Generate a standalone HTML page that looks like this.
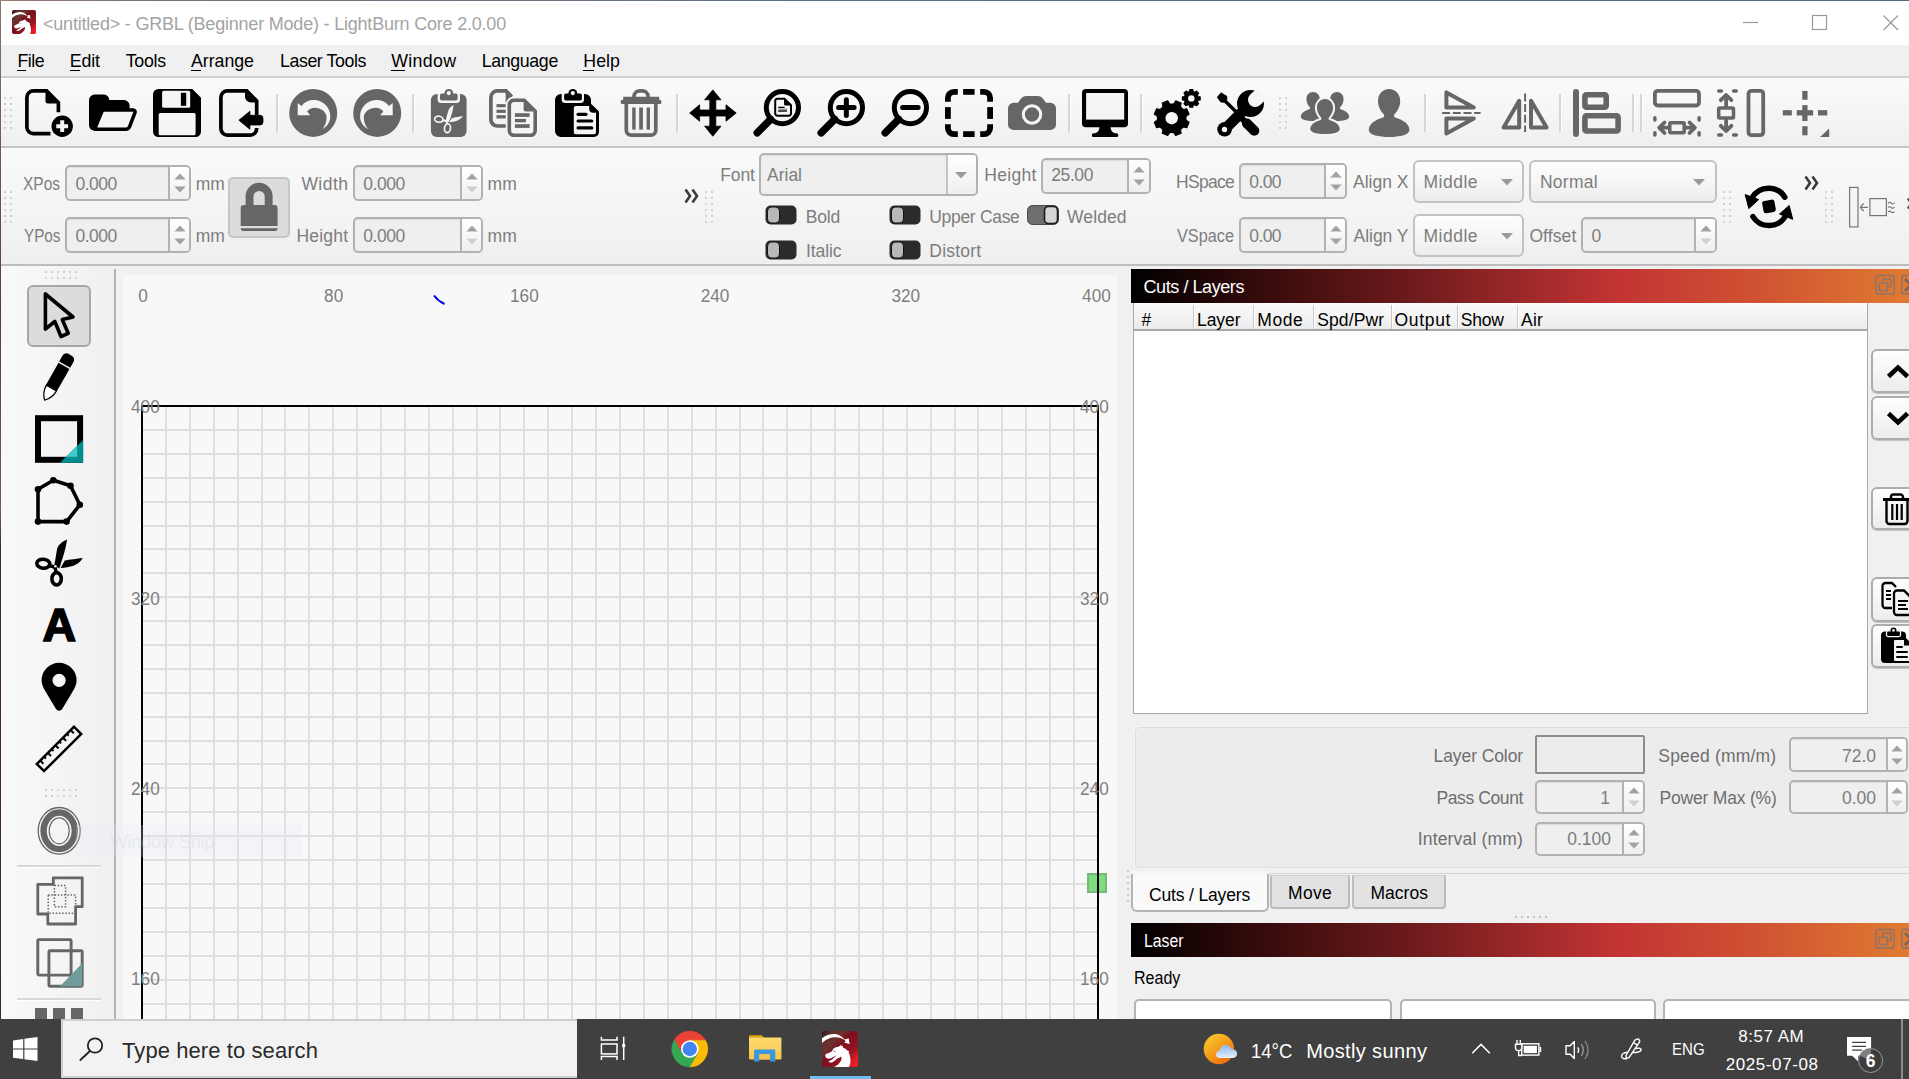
<!DOCTYPE html>
<html><head><meta charset="utf-8"><title>LightBurn</title>
<style>
html,body{margin:0;padding:0;}
body{width:1909px;height:1079px;position:relative;overflow:hidden;background:#f0f0f0;font-family:"Liberation Sans",sans-serif;}
.t{position:absolute;white-space:pre;line-height:normal;}
svg{overflow:visible;display:block;}
div{box-sizing:content-box;}
</style></head><body>
<div style="position:absolute;left:0px;top:0px;width:1909px;height:45px;background:#fff;"></div>
<div style="position:absolute;left:0px;top:0px;width:1909px;height:1px;background:linear-gradient(90deg,#9a7d72 0%,#74707a 8%,#5f7383 45%,#5b6f80 70%,#566777 100%);"></div>
<div style="position:absolute;left:0px;top:1px;width:1px;height:1019px;background:linear-gradient(#8c746e 0%,#5a3c34 30%,#7a5a50 50%,#3e2824 54%,#4a2c2c 75%,#3a2428 100%);"></div>
<span class="t" style="left:43.00px;top:13.71px;font-size:18px;color:#a4a4a4;letter-spacing:-0.204px;">&lt;untitled&gt; - GRBL (Beginner Mode) - LightBurn Core 2.0.00</span>
<svg style="position:absolute;left:1735px;top:8px;" width="170" height="30" viewBox="0 0 170 30"><g stroke="#9a9a9a" stroke-width="1.2" fill="none">
<path d="M8 14.5H23"/><rect x="77.5" y="7.5" width="14" height="14"/><path d="M148.5 7.5L163 22M163 7.5L148.5 22"/></g></svg>
<div style="position:absolute;left:1px;top:45px;width:1908px;height:33px;background:#f0f0f0;"></div>
<div style="position:absolute;left:1px;top:76px;width:1908px;height:2px;background:#cfcfcf;"></div>
<span class="t" style="left:17.40px;top:50.89px;font-size:17.8px;color:#000;letter-spacing:-0.471px;text-decoration-thickness:1px;text-underline-offset:2px;">File</span>
<div style="position:absolute;left:17px;top:70px;width:9px;height:1px;background:#000;"></div>
<span class="t" style="left:69.70px;top:50.89px;font-size:17.8px;color:#000;letter-spacing:-0.118px;text-decoration-thickness:1px;text-underline-offset:2px;">Edit</span>
<div style="position:absolute;left:70px;top:70px;width:10px;height:1px;background:#000;"></div>
<span class="t" style="left:125.70px;top:50.89px;font-size:17.8px;color:#000;letter-spacing:-0.251px;text-decoration-thickness:1px;text-underline-offset:2px;">Tools</span>
<span class="t" style="left:191.00px;top:50.89px;font-size:17.8px;color:#000;letter-spacing:-0.047px;text-decoration-thickness:1px;text-underline-offset:2px;">Arrange</span>
<div style="position:absolute;left:191px;top:70px;width:10px;height:1px;background:#000;"></div>
<span class="t" style="left:280.00px;top:50.89px;font-size:17.8px;color:#000;letter-spacing:-0.428px;text-decoration-thickness:1px;text-underline-offset:2px;">Laser Tools</span>
<span class="t" style="left:391.20px;top:50.89px;font-size:17.8px;color:#000;letter-spacing:0.348px;text-decoration-thickness:1px;text-underline-offset:2px;">Window</span>
<div style="position:absolute;left:391px;top:70px;width:14px;height:1px;background:#000;"></div>
<span class="t" style="left:481.70px;top:50.89px;font-size:17.8px;color:#000;letter-spacing:-0.362px;text-decoration-thickness:1px;text-underline-offset:2px;">Language</span>
<span class="t" style="left:583.30px;top:50.89px;font-size:17.8px;color:#000;letter-spacing:0.023px;text-decoration-thickness:1px;text-underline-offset:2px;">Help</span>
<div style="position:absolute;left:583px;top:70px;width:11px;height:1px;background:#000;"></div>
<div style="position:absolute;left:1px;top:78px;width:1908px;height:69px;background:linear-gradient(#fbfbfb,#efefef);"></div>
<div style="position:absolute;left:1px;top:146px;width:1908px;height:2px;background:#c4c4c4;"></div>
<div style="position:absolute;left:1px;top:148px;width:1908px;height:117px;background:linear-gradient(#fafafa,#efefef);"></div>
<div style="position:absolute;left:1px;top:264px;width:1908px;height:2px;background:#bdbdbd;"></div>
<svg style="position:absolute;left:4px;top:97px;" width="8" height="34" viewBox="0 0 8 34"><g fill="#d2d2d2"><rect x="0" y="0" width="2" height="2"/><rect x="6" y="0" width="2" height="2"/><rect x="0" y="6" width="2" height="2"/><rect x="6" y="6" width="2" height="2"/><rect x="0" y="12" width="2" height="2"/><rect x="6" y="12" width="2" height="2"/><rect x="0" y="18" width="2" height="2"/><rect x="6" y="18" width="2" height="2"/><rect x="0" y="24" width="2" height="2"/><rect x="6" y="24" width="2" height="2"/><rect x="0" y="30" width="2" height="2"/><rect x="6" y="30" width="2" height="2"/></g></svg>
<svg style="position:absolute;left:1279px;top:97px;" width="8" height="34" viewBox="0 0 8 34"><g fill="#d2d2d2"><rect x="0" y="0" width="2" height="2"/><rect x="6" y="0" width="2" height="2"/><rect x="0" y="6" width="2" height="2"/><rect x="6" y="6" width="2" height="2"/><rect x="0" y="12" width="2" height="2"/><rect x="6" y="12" width="2" height="2"/><rect x="0" y="18" width="2" height="2"/><rect x="6" y="18" width="2" height="2"/><rect x="0" y="24" width="2" height="2"/><rect x="6" y="24" width="2" height="2"/><rect x="0" y="30" width="2" height="2"/><rect x="6" y="30" width="2" height="2"/></g></svg>
<div style="position:absolute;left:276px;top:94px;width:2px;height:38px;background:#d6d6d6;border-right:1px solid #fdfdfd;"></div>
<div style="position:absolute;left:412px;top:94px;width:2px;height:38px;background:#d6d6d6;border-right:1px solid #fdfdfd;"></div>
<div style="position:absolute;left:676px;top:94px;width:2px;height:38px;background:#d6d6d6;border-right:1px solid #fdfdfd;"></div>
<div style="position:absolute;left:1068px;top:94px;width:2px;height:38px;background:#d6d6d6;border-right:1px solid #fdfdfd;"></div>
<div style="position:absolute;left:1140px;top:94px;width:2px;height:38px;background:#d6d6d6;border-right:1px solid #fdfdfd;"></div>
<div style="position:absolute;left:1424px;top:94px;width:2px;height:38px;background:#d6d6d6;border-right:1px solid #fdfdfd;"></div>
<div style="position:absolute;left:1559px;top:94px;width:2px;height:38px;background:#d6d6d6;border-right:1px solid #fdfdfd;"></div>
<div style="position:absolute;left:1632px;top:94px;width:2px;height:38px;background:#d6d6d6;border-right:1px solid #fdfdfd;"></div>
<div style="position:absolute;left:1640px;top:94px;width:2px;height:38px;background:#d6d6d6;border-right:1px solid #fdfdfd;"></div>
<svg style="position:absolute;left:25px;top:89px;" width="48" height="48" viewBox="0 0 48 48"><path d="M25.5 44.7H8.4A6.5 6.5 0 0 1 1.9 38.2V8.4A6.5 6.5 0 0 1 8.4 1.9H21.6L33.4 13.7V23.2" fill="none" stroke="#000" stroke-width="3.7"/>
<path d="M20.5 2.5V12.2A2.4 2.4 0 0 0 22.9 14.6H33Z" fill="#000"/>
<circle cx="37.2" cy="37.2" r="12.2" fill="#f5f5f5"/><circle cx="37.2" cy="37.2" r="10.7" fill="#000"/>
<path d="M31.3 37.2H43.1M37.2 31.3V43.1" stroke="#f5f5f5" stroke-width="4"/></svg>
<svg style="position:absolute;left:89px;top:89px;" width="48" height="48" viewBox="0 0 48 48"><path d="M0 11.2A5.6 5.6 0 0 1 5.6 5.6H15A5.4 5.4 0 0 1 20.3 11H35A5.6 5.6 0 0 1 40.6 16.6V21H13L4.5 41.6A6 6 0 0 1 0 36Z" fill="#000"/>
<path d="M13.6 20.9H44.2A1.9 1.9 0 0 1 46 23.5L40.6 37.6A4.2 4.2 0 0 1 36.7 40.2H5.6Z" fill="#f5f5f5" stroke="#000" stroke-width="3.5" stroke-linejoin="round"/></svg>
<svg style="position:absolute;left:153px;top:89px;" width="48" height="48" viewBox="0 0 48 48"><path d="M5.5 0H39.3L48 8.7V42.5A5.5 5.5 0 0 1 42.5 48H5.5A5.5 5.5 0 0 1 0 42.5V5.5A5.5 5.5 0 0 1 5.5 0Z" fill="#000"/>
<rect x="9.1" y="1.8" width="28.1" height="17" rx="1.6" fill="#f5f5f5"/><rect x="27.9" y="3.8" width="5.3" height="13" fill="#000"/>
<rect x="5.7" y="23.9" width="36.9" height="22.4" rx="1.6" fill="#f5f5f5"/></svg>
<svg style="position:absolute;left:217px;top:89px;" width="48" height="48" viewBox="0 0 48 48"><path d="M39.7 26.3V12L29.8 1.9H10.4A6.5 6.5 0 0 0 3.9 8.4V39.6A6.5 6.5 0 0 0 10.4 46.1H33.2A6.5 6.5 0 0 0 39.7 39.6V39" fill="none" stroke="#000" stroke-width="3.7"/>
<path d="M28 2.5V7.4A6 6 0 0 0 34 13.4H39Z" fill="#000"/>
<path d="M21.9 31.2L32.9 22.2V26.3H43A3 3 0 0 1 46 29.3V33A3 3 0 0 1 43 36H32.9V40.3Z" fill="#000" stroke="#000" stroke-width="0.8" stroke-linejoin="round"/></svg>
<svg style="position:absolute;left:289px;top:89px;" width="48" height="48" viewBox="0 0 48 48"><circle cx="24.2" cy="23.9" r="24" fill="#666"/><path d="M8.7 14.1L12.4 16.9Q17.2 11.1 24.6 11.1C34 11.1 41.3 18.4 41.3 27.5C41.3 33 38 37.6 33.6 39.9C36.4 36 37.6 32.6 37.6 28.6C37.6 23 32 18.8 25.6 18.8Q21 18.8 18.1 22.5L21.2 26.2H8.7Z" fill="#f5f5f5"/></svg>
<svg style="position:absolute;left:353px;top:89px;" width="48" height="48" viewBox="0 0 48 48"><circle cx="24.2" cy="23.9" r="24" fill="#666"/><path transform="translate(48.4,0) scale(-1,1)" d="M8.7 14.1L12.4 16.9Q17.2 11.1 24.6 11.1C34 11.1 41.3 18.4 41.3 27.5C41.3 33 38 37.6 33.6 39.9C36.4 36 37.6 32.6 37.6 28.6C37.6 23 32 18.8 25.6 18.8Q21 18.8 18.1 22.5L21.2 26.2H8.7Z" fill="#f5f5f5"/></svg>
<svg style="position:absolute;left:424px;top:89px;" width="48" height="48" viewBox="0 0 48 48"><rect x="6.9" y="5" width="35.7" height="43" rx="6" fill="#666"/>
<path d="M13.6 4.5V10.5A3.6 3.6 0 0 0 17.2 14.1H32.4A3.6 3.6 0 0 0 36 10.5V4.5Z" fill="#f5f5f5"/>
<circle cx="24.8" cy="4.3" r="4.4" fill="#666"/>
<rect x="16" y="4.4" width="17.6" height="7.2" rx="1.8" fill="#666"/>
<circle cx="24.8" cy="4.1" r="2.1" fill="#f5f5f5"/>
<g fill="#f5f5f5"><path d="M29.6 16.1C26 18 24.4 20.5 23.8 23.5L21.5 32L25 33C27.2 27.5 29 22 29.6 16.1Z"/>
<path d="M39 27C35.5 27.6 31 28.3 27.8 29.3L25.2 33.2C31 32.8 36 31.5 39 27Z"/></g>
<ellipse cx="14.8" cy="30.2" rx="4.2" ry="3" fill="none" stroke="#f5f5f5" stroke-width="1.7" transform="rotate(8 14.8 30.2)"/>
<ellipse cx="23.5" cy="39.3" rx="3" ry="4.4" fill="none" stroke="#f5f5f5" stroke-width="1.7" transform="rotate(8 23.5 39.3)"/>
<path d="M19 31L23 32.6M22.6 32.6L23.4 35" stroke="#f5f5f5" stroke-width="2"/></svg>
<svg style="position:absolute;left:488px;top:89px;" width="48" height="48" viewBox="0 0 48 48"><path d="M18.5 37H9.4A6.5 6.5 0 0 1 2.9 30.5V8.4A6.5 6.5 0 0 1 9.4 1.9H18L23.8 7.7" fill="none" stroke="#666" stroke-width="3.7"/>
<path d="M17.6 1V14H24.5V8Z" fill="#666"/>
<g fill="#666"><rect x="8.5" y="15.1" width="9.5" height="3.2"/><rect x="8.5" y="20.7" width="9.5" height="3.2"/><rect x="8.5" y="26.2" width="9.5" height="3.3"/></g>
<path d="M25.4 9.4H37L49 21.6V41.6A6.4 6.4 0 0 1 42.6 48H25.9A6.4 6.4 0 0 1 19.5 41.6V15.8A6.4 6.4 0 0 1 25.4 9.4Z" fill="#f5f5f5" stroke="#f5f5f5" stroke-width="3.6"/><path d="M25.4 9.4H37L49 21.6V41.6A6.4 6.4 0 0 1 42.6 48H25.9A6.4 6.4 0 0 1 19.5 41.6V15.8A6.4 6.4 0 0 1 25.4 9.4Z" fill="#666"/>
<path d="M26 13H35.6V20.5A2 2 0 0 0 37.6 22.5H45.4V41.2A3.2 3.2 0 0 1 42.2 44.4H26.3A3.2 3.2 0 0 1 23.1 41.2V16.2A3.2 3.2 0 0 1 26 13Z" fill="#f5f5f5"/>
<g fill="#666"><rect x="26.9" y="24.2" width="14.7" height="3.7"/><rect x="26.9" y="29.9" width="11" height="3.4"/><rect x="26.9" y="35.2" width="14.7" height="3.7"/></g></svg>
<svg style="position:absolute;left:553px;top:89px;" width="48" height="48" viewBox="0 0 48 48"><path d="M8 5H32A6 6 0 0 1 38 11V14.8L46 22.6V43A5 5 0 0 1 41 48H8A6 6 0 0 1 2 42V11A6 6 0 0 1 8 5Z" fill="#000"/>
<path d="M8.7 4.5V10.5A3.6 3.6 0 0 0 12.3 14.1H27.4A3.6 3.6 0 0 0 31 10.5V4.5Z" fill="#f5f5f5"/>
<circle cx="19.8" cy="4.3" r="4.4" fill="#000"/>
<rect x="11.1" y="4.4" width="17.8" height="7.2" rx="1.8" fill="#000"/>
<circle cx="19.8" cy="4.1" r="2.1" fill="#f5f5f5"/>
<path d="M22.8 17.1H36.2V19.8A4 4 0 0 0 40.2 23.8H43V43.3A2 2 0 0 1 41 45.3H22.8A2 2 0 0 1 20.8 43.3V19.1A2 2 0 0 1 22.8 17.1Z" fill="#f5f5f5"/>
<g stroke="#000" stroke-width="3.2" stroke-linecap="round"><path d="M25.1 25.3H33"/><path d="M25.1 32H38.7"/><path d="M25.1 38.9H38.7"/></g></svg>
<svg style="position:absolute;left:617px;top:89px;" width="48" height="48" viewBox="0 0 48 48"><path d="M17 8.5V7.6A5.7 5.7 0 0 1 22.7 1.9H25.4A5.7 5.7 0 0 1 31.1 7.6V8.5" fill="none" stroke="#666" stroke-width="3.7"/>
<rect x="6.1" y="7.7" width="36.2" height="4" rx="1" fill="#666"/><rect x="3.8" y="11" width="40.5" height="3.9" rx="0.8" fill="#666"/>
<path d="M9.3 14V41.2A5 5 0 0 0 14.3 46.2H33.8A5 5 0 0 0 38.8 41.2V14" fill="none" stroke="#666" stroke-width="3.7"/>
<g fill="#666"><rect x="15.2" y="18.5" width="3.4" height="22.1"/><rect x="22.2" y="18.5" width="3.7" height="22.1"/><rect x="29.6" y="18.5" width="3.4" height="22.1"/></g></svg>
<svg style="position:absolute;left:689px;top:89px;" width="48" height="48" viewBox="0 0 48 48"><path d="M23.8 0.9L32 10.8H26.8V21H37V15.8L47.2 24L37 32.2V27H26.8V37.2H32L23.8 47.2L15.6 37.2H20.8V27H10.6V32.2L0.7 24L10.6 15.8V21H20.8V10.8H15.6Z" fill="#000" stroke="#000" stroke-width="0.8" stroke-linejoin="round"/></svg>
<svg style="position:absolute;left:753px;top:89px;" width="48" height="48" viewBox="0 0 48 48"><circle cx="29.4" cy="18.6" r="16.1" fill="none" stroke="#000" stroke-width="5"/><path d="M17.6 30.4L4.2 43.8" stroke="#000" stroke-width="7.4" stroke-linecap="round"/><path d="M24.2 9.7H31.5L38 16.2V24.5A2.2 2.2 0 0 1 35.8 26.7H24.4A2.2 2.2 0 0 1 22.2 24.5V11.9A2.2 2.2 0 0 1 24.2 9.7Z" fill="none" stroke="#000" stroke-width="2"/>
<path d="M31 9.5V15A1.5 1.5 0 0 0 32.5 16.5H38.2Z" fill="#000"/><path d="M25.2 18.4H31.6" stroke="#000" stroke-width="1.3"/><path d="M25.2 20.2H34" stroke="#888" stroke-width="1.2"/><path d="M25.2 22H34" stroke="#000" stroke-width="1.4"/></svg>
<svg style="position:absolute;left:817px;top:89px;" width="48" height="48" viewBox="0 0 48 48"><circle cx="29.4" cy="18.6" r="16.1" fill="none" stroke="#000" stroke-width="5"/><path d="M17.6 30.4L4.2 43.8" stroke="#000" stroke-width="7.4" stroke-linecap="round"/><path d="M21.6 18.6H37.1M29.35 10.8V26.4" stroke="#000" stroke-width="5" stroke-linecap="round"/></svg>
<svg style="position:absolute;left:881px;top:89px;" width="48" height="48" viewBox="0 0 48 48"><circle cx="29.4" cy="18.6" r="16.1" fill="none" stroke="#000" stroke-width="5"/><path d="M17.6 30.4L4.2 43.8" stroke="#000" stroke-width="7.4" stroke-linecap="round"/><path d="M21.6 18.6H37.1" stroke="#000" stroke-width="5" stroke-linecap="round"/></svg>
<svg style="position:absolute;left:945px;top:89px;" width="48" height="48" viewBox="0 0 48 48"><g fill="none" stroke="#000" stroke-width="5.8"><path d="M2.9 12.8V8.9A6 6 0 0 1 8.9 2.9H12.8"/><path d="M18.1 2.9H29.6"/><path d="M35.2 2.9H39.1A6 6 0 0 1 45.1 8.9V12.8"/><path d="M45.1 18.1V29.9"/><path d="M45.1 35.2V39.1A6 6 0 0 1 39.1 45.1H35.2"/><path d="M29.6 45.1H18.1"/><path d="M12.8 45.1H8.9A6 6 0 0 1 2.9 39.1V35.2"/><path d="M2.9 29.9V18.1"/></g></svg>
<svg style="position:absolute;left:1008px;top:89px;" width="48" height="48" viewBox="0 0 48 48"><path d="M5.5 13.8H10C12.5 10 14.5 6.9 18 6.9H30C33.5 6.9 35.5 10 38 13.8H42.5A5.5 5.5 0 0 1 48 19.3V35.4A5.5 5.5 0 0 1 42.500 40.9H5.5A5.5 5.5 0 0 1 0 35.4V19.3A5.5 5.5 0 0 1 5.5 13.8Z" fill="#666"/>
<circle cx="24" cy="25.5" r="8.7" fill="none" stroke="#f5f5f5" stroke-width="3.1"/></svg>
<svg style="position:absolute;left:1081px;top:89px;" width="48" height="48" viewBox="0 0 48 48"><rect x="1" y="0" width="46" height="38.3" rx="3.8" fill="#000"/><rect x="5.1" y="4" width="38.1" height="26.6" fill="#f5f5f5"/>
<path d="M18.4 38H29.6C29.6 41.5 31.5 44.3 35.5 44.3A1.85 1.85 0 0 1 35.500 48H12.600A1.85 1.85 0 0 1 12.6 44.3C16.5 44.3 18.4 41.5 18.4 38Z" fill="#000"/></svg>
<svg style="position:absolute;left:1152px;top:89px;" width="48" height="48" viewBox="0 0 48 48"><path d="M21.84 14.76L23.69 11.85L29.15 14.12L28.40 17.47A8.03 8.03 0 0 0 31.43 20.50L31.43 20.50L34.78 19.75L37.05 25.21L34.14 27.06A8.03 8.03 0 0 0 34.14 31.34L34.14 31.34L37.05 33.19L34.78 38.65L31.43 37.90A8.03 8.03 0 0 0 28.40 40.93L28.40 40.93L29.15 44.28L23.69 46.55L21.84 43.64A8.03 8.03 0 0 0 17.56 43.64L17.56 43.64L15.71 46.55L10.25 44.28L11.00 40.93A8.03 8.03 0 0 0 7.97 37.90L7.97 37.90L4.62 38.65L2.35 33.19L5.26 31.34A8.03 8.03 0 0 0 5.26 27.06L5.26 27.06L2.35 25.21L4.62 19.75L7.97 20.50A8.03 8.03 0 0 0 11.00 17.47L11.00 17.47L10.25 14.12L15.71 11.85L17.56 14.76A8.03 8.03 0 0 0 21.84 14.76Z" fill="#000" stroke="#000" stroke-width="1.2" stroke-linejoin="round"/><circle cx="19.7" cy="29.2" r="6.2" fill="#f5f5f5"/><path d="M37.55 2.42L37.80 0.53L40.80 0.53L41.05 2.42A3.96 3.96 0 0 0 43.00 3.22L43.00 3.22L44.52 2.07L46.63 4.18L45.48 5.70A3.96 3.96 0 0 0 46.28 7.65L46.28 7.65L48.17 7.90L48.17 10.90L46.28 11.15A3.96 3.96 0 0 0 45.48 13.10L45.48 13.10L46.63 14.62L44.52 16.73L43.00 15.58A3.96 3.96 0 0 0 41.05 16.38L41.05 16.38L40.80 18.27L37.80 18.27L37.55 16.38A3.96 3.96 0 0 0 35.60 15.58L35.60 15.58L34.08 16.73L31.97 14.62L33.12 13.10A3.96 3.96 0 0 0 32.32 11.15L32.32 11.15L30.43 10.90L30.43 7.90L32.32 7.65A3.96 3.96 0 0 0 33.12 5.70L33.12 5.70L31.97 4.18L34.08 2.07L35.60 3.22A3.96 3.96 0 0 0 37.55 2.42Z" fill="#000" stroke="#000" stroke-width="1.2" stroke-linejoin="round"/><circle cx="39.3" cy="9.4" r="3.2" fill="#f5f5f5"/></svg>
<svg style="position:absolute;left:1216px;top:89px;" width="48" height="48" viewBox="0 0 48 48"><path d="M6 9L33 35.500" fill="none" stroke="#000" stroke-width="3.500"/>
<path d="M1.300 8.200L5 3.800L10.800 7.300L10.900 10.400L8.200 13.300L4.700 13Z" fill="#000" stroke="#000" stroke-width="0.800" stroke-linejoin="round"/>
<path d="M31 34.500L38.300 41.800" stroke="#000" stroke-width="10" stroke-linecap="round"/>
<path d="M27.200 30.800L31.500 35" stroke="#000" stroke-width="6" stroke-linecap="round"/>
<path d="M9 40L33 16" stroke="#000" stroke-width="10.600" stroke-linecap="round"/>
<circle cx="8.600" cy="40.300" r="7.300" fill="#000"/>
<circle cx="34.500" cy="14.500" r="13.500" fill="#000"/>
<clipPath id="wcl"><circle cx="34.500" cy="14.500" r="14"/></clipPath><path clip-path="url(#wcl)" d="M39.200 10.800L50 0.800" stroke="#f5f5f5" stroke-width="14.400" stroke-linecap="round"/>
<circle cx="8.500" cy="40.500" r="2.700" fill="#f5f5f5"/></svg>
<svg style="position:absolute;left:1300px;top:89px;" width="48" height="48" viewBox="0 0 48 48"><path transform="translate(13.1,2.9) scale(0.604)" d="M0 0C6.5 0 11.1 5 11.1 12C11.1 18 8 22.5 5.2 25.5C4.6 26.5 4.8 28 6 28.6C14 31 20.3 35 20.3 41C20.3 46 10 48 0 48C-10 48-20.3 46-20.3 41C-20.3 35-14 31-6 28.6C-4.800 28-4.600 26.5-5.200 25.5C-8 22.5-11.1 18-11.1 12C-11.1 5-6.5 0 0 0Z" fill="#666"/><path transform="translate(36.9,2.9) scale(0.604)" d="M0 0C6.5 0 11.1 5 11.1 12C11.1 18 8 22.5 5.2 25.5C4.6 26.5 4.8 28 6 28.6C14 31 20.3 35 20.3 41C20.3 46 10 48 0 48C-10 48-20.3 46-20.3 41C-20.3 35-14 31-6 28.6C-4.800 28-4.600 26.5-5.200 25.5C-8 22.5-11.1 18-11.1 12C-11.1 5-6.5 0 0 0Z" fill="#666"/>
<path transform="translate(25,10.1) scale(0.727)" d="M0 0C6.5 0 11.1 5 11.1 12C11.1 18 8 22.5 5.2 25.5C4.6 26.5 4.8 28 6 28.6C14 31 20.3 35 20.3 41C20.3 46 10 48 0 48C-10 48-20.3 46-20.3 41C-20.3 35-14 31-6 28.6C-4.800 28-4.600 26.5-5.200 25.5C-8 22.5-11.1 18-11.1 12C-11.1 5-6.5 0 0 0Z" fill="#666" stroke="#f5f5f5" stroke-width="5.5"/><path transform="translate(25,10.1) scale(0.727)" d="M0 0C6.5 0 11.1 5 11.1 12C11.1 18 8 22.5 5.2 25.5C4.6 26.5 4.8 28 6 28.6C14 31 20.3 35 20.3 41C20.3 46 10 48 0 48C-10 48-20.3 46-20.3 41C-20.3 35-14 31-6 28.6C-4.800 28-4.600 26.5-5.200 25.5C-8 22.5-11.1 18-11.1 12C-11.1 5-6.5 0 0 0Z" fill="#666"/></svg>
<svg style="position:absolute;left:1365px;top:89px;" width="48" height="48" viewBox="0 0 48 48"><path transform="translate(24.1,0)" d="M0 0C6.5 0 11.1 5 11.1 12C11.1 18 8 22.5 5.2 25.5C4.6 26.5 4.8 28 6 28.6C14 31 20.3 35 20.3 41C20.3 46 10 48 0 48C-10 48-20.3 46-20.3 41C-20.3 35-14 31-6 28.6C-4.800 28-4.600 26.5-5.200 25.5C-8 22.5-11.1 18-11.1 12C-11.1 5-6.5 0 0 0Z" fill="#666"/></svg>
<svg style="position:absolute;left:1437px;top:89px;" width="48" height="48" viewBox="0 0 48 48"><g fill="none" stroke="#666" stroke-width="4" stroke-linejoin="round"><path d="M9.4 3.4V18.5H36.8Z"/><path d="M9.4 44.6V29.5H36.8Z"/></g>
<path d="M5.1 24H43.6" stroke="#666" stroke-width="2" stroke-dasharray="8 2.7"/></svg>
<svg style="position:absolute;left:1501px;top:89px;" width="48" height="48" viewBox="0 0 48 48"><g fill="none" stroke="#666" stroke-width="4" stroke-linejoin="round"><path d="M18.2 11.8V38.6H2.6Z"/><path d="M30 11.8V38.6H45.6Z"/></g>
<path d="M24.1 4.4V43" stroke="#666" stroke-width="2" stroke-dasharray="8 2.7"/></svg>
<svg style="position:absolute;left:1573px;top:89px;" width="48" height="48" viewBox="0 0 48 48"><path d="M3 3V45" stroke="#666" stroke-width="6" stroke-linecap="round"/>
<g fill="none" stroke="#666" stroke-width="5.6"><rect x="11.9" y="5.7" width="21.3" height="12.5" rx="1.5"/><rect x="11.9" y="26.8" width="33.2" height="15.2" rx="1.5"/></g></svg>
<svg style="position:absolute;left:1653px;top:89px;" width="48" height="48" viewBox="0 0 48 48"><rect x="1.9" y="1.8" width="44.1" height="14.7" rx="3" fill="none" stroke="#666" stroke-width="3.8"/>
<g stroke="#666" stroke-width="3.5" stroke-linecap="round"><path d="M1.9 28.8V31"/><path d="M1.9 43.8V46"/><path d="M46.1 28.8V31"/><path d="M46.1 43.8V46"/></g>
<rect x="16.8" y="33.8" width="14.400" height="10" rx="1" fill="none" stroke="#666" stroke-width="3.5"/>
<g fill="none" stroke="#666" stroke-width="3.8" stroke-linecap="round" stroke-linejoin="round"><path d="M6.5 38.7H15"/><path d="M11.5 33.5L6.3 38.7L11.5 44"/><path d="M33 38.7H41.5"/><path d="M36.5 33.5L41.7 38.700L36.5 44"/></g></svg>
<svg style="position:absolute;left:1717px;top:89px;" width="48" height="48" viewBox="0 0 48 48"><rect x="31.5" y="1.8" width="14.7" height="44.4" rx="3" fill="none" stroke="#666" stroke-width="3.8"/>
<g stroke="#666" stroke-width="3.5" stroke-linecap="round"><path d="M1.700 1.9H4.4"/><path d="M16.6 1.9H19.3"/><path d="M1.700 46.100H4.4"/><path d="M16.6 46.100H19.3"/></g>
<rect x="1.700" y="19" width="14.800" height="9.9" rx="1" fill="none" stroke="#666" stroke-width="3.5"/>
<g fill="none" stroke="#666" stroke-width="3.8" stroke-linecap="round" stroke-linejoin="round"><path d="M9.1 6.5V17"/><path d="M3.800 11.200L9.1 6L14.4 11.200"/><path d="M9.1 31V41.5"/><path d="M3.800 36.800L9.1 42L14.4 36.800"/></g></svg>
<svg style="position:absolute;left:1781px;top:89px;" width="48" height="48" viewBox="0 0 48 48"><g stroke="#666" stroke-width="5.3"><path d="M15.7 23.8H32.100"/><path d="M23.9 16.1V32"/><path d="M1.800 23.8H10.8"/><path d="M37 23.8H46.3"/><path d="M23.9 1.9V10.8"/><path d="M23.9 37.2V46.3"/></g>
<path d="M48.2 39.5V48H39.1Z" fill="#666"/></svg>
<svg style="position:absolute;left:4px;top:191px;" width="8" height="34" viewBox="0 0 8 34"><g fill="#d2d2d2"><rect x="0" y="0" width="2" height="2"/><rect x="6" y="0" width="2" height="2"/><rect x="0" y="6" width="2" height="2"/><rect x="6" y="6" width="2" height="2"/><rect x="0" y="12" width="2" height="2"/><rect x="6" y="12" width="2" height="2"/><rect x="0" y="18" width="2" height="2"/><rect x="6" y="18" width="2" height="2"/><rect x="0" y="24" width="2" height="2"/><rect x="6" y="24" width="2" height="2"/><rect x="0" y="30" width="2" height="2"/><rect x="6" y="30" width="2" height="2"/></g></svg>
<span class="t" style="left:23.00px;top:174.16px;font-size:17.5px;color:#7d7d7d;transform:scaleX(0.8846);transform-origin:0 0;">XPos</span>
<div style="position:absolute;left:65px;top:165px;width:122px;height:32px;border:2px solid #b2b2b2;border-radius:5px;background:#efefef;box-shadow:inset 0 2px 1px -1px #dcdcdc;"></div><div style="position:absolute;left:168px;top:167px;width:19px;height:32px;background:linear-gradient(#fff,#efefef);border-left:2px solid #b2b2b2;border-radius:0 3px 3px 0;"></div><svg style="position:absolute;left:173.5px;top:173.0px;" width="12" height="20" viewBox="0 0 12 20"><path d="M6 0.5L11.7 6.5H0.3Z" fill="#a2a2a2"/><path d="M0.3 13.5H11.7L6 19.5Z" fill="#a2a2a2"/></svg><span class="t" style="left:75.40px;top:174.16px;font-size:17.5px;color:#7d7d7d;letter-spacing:-0.479px;">0.000</span>
<span class="t" style="left:195.70px;top:174.16px;font-size:17.5px;color:#7d7d7d;letter-spacing:-0.078px;">mm</span>
<span class="t" style="left:23.50px;top:226.16px;font-size:17.5px;color:#7d7d7d;transform:scaleX(0.8726);transform-origin:0 0;">YPos</span>
<div style="position:absolute;left:65px;top:217px;width:122px;height:32px;border:2px solid #b2b2b2;border-radius:5px;background:#efefef;box-shadow:inset 0 2px 1px -1px #dcdcdc;"></div><div style="position:absolute;left:168px;top:219px;width:19px;height:32px;background:linear-gradient(#fff,#efefef);border-left:2px solid #b2b2b2;border-radius:0 3px 3px 0;"></div><svg style="position:absolute;left:173.5px;top:225.0px;" width="12" height="20" viewBox="0 0 12 20"><path d="M6 0.5L11.7 6.5H0.3Z" fill="#a2a2a2"/><path d="M0.3 13.5H11.7L6 19.5Z" fill="#a2a2a2"/></svg><span class="t" style="left:75.40px;top:226.16px;font-size:17.5px;color:#7d7d7d;letter-spacing:-0.479px;">0.000</span>
<span class="t" style="left:195.70px;top:226.16px;font-size:17.5px;color:#7d7d7d;letter-spacing:-0.078px;">mm</span>
<div style="position:absolute;left:228px;top:177px;width:58px;height:57px;border:2px solid #c6c6c6;border-radius:5px;background:#dcdcdc;"></div>
<svg style="position:absolute;left:240px;top:183px;" width="38" height="48" viewBox="0 0 38 48"><path d="M5.600 23V13.2A13.5 13.5 0 0 1 32.6 13.2V23H24.7V13.500A5.600 5.600 0 0 0 13.5 13.500V23Z" fill="#666"/>
<path d="M3.700 22H34.6A3 3 0 0 1 37.6 25V42.900H0.700V25A3 3 0 0 1 3.700 22Z" fill="#666"/>
<path d="M0.700 45.3H37.6A2.600 2.600 0 0 1 35 47.900H3.300A2.600 2.600 0 0 1 0.700 45.300Z" fill="#666"/></svg>
<span class="t" style="left:301.40px;top:174.16px;font-size:17.5px;color:#7d7d7d;letter-spacing:0.453px;">Width</span>
<div style="position:absolute;left:353px;top:165px;width:126px;height:32px;border:2px solid #b2b2b2;border-radius:5px;background:#efefef;box-shadow:inset 0 2px 1px -1px #dcdcdc;"></div><div style="position:absolute;left:460px;top:167px;width:19px;height:32px;background:linear-gradient(#fff,#efefef);border-left:2px solid #b2b2b2;border-radius:0 3px 3px 0;"></div><svg style="position:absolute;left:465.5px;top:173.0px;" width="12" height="20" viewBox="0 0 12 20"><path d="M6 0.5L11.7 6.5H0.3Z" fill="#a2a2a2"/><path d="M0.3 13.5H11.7L6 19.5Z" fill="#cfcfcf"/></svg><span class="t" style="left:363.30px;top:174.16px;font-size:17.5px;color:#7d7d7d;letter-spacing:-0.459px;">0.000</span>
<span class="t" style="left:487.40px;top:174.16px;font-size:17.5px;color:#7d7d7d;letter-spacing:0.172px;">mm</span>
<span class="t" style="left:296.40px;top:226.16px;font-size:17.5px;color:#7d7d7d;letter-spacing:0.235px;">Height</span>
<div style="position:absolute;left:353px;top:217px;width:126px;height:32px;border:2px solid #b2b2b2;border-radius:5px;background:#efefef;box-shadow:inset 0 2px 1px -1px #dcdcdc;"></div><div style="position:absolute;left:460px;top:219px;width:19px;height:32px;background:linear-gradient(#fff,#efefef);border-left:2px solid #b2b2b2;border-radius:0 3px 3px 0;"></div><svg style="position:absolute;left:465.5px;top:225.0px;" width="12" height="20" viewBox="0 0 12 20"><path d="M6 0.5L11.7 6.5H0.3Z" fill="#a2a2a2"/><path d="M0.3 13.5H11.7L6 19.5Z" fill="#cfcfcf"/></svg><span class="t" style="left:363.30px;top:226.16px;font-size:17.5px;color:#7d7d7d;letter-spacing:-0.459px;">0.000</span>
<span class="t" style="left:487.40px;top:226.16px;font-size:17.5px;color:#7d7d7d;letter-spacing:0.172px;">mm</span>
<svg style="position:absolute;left:684px;top:187.5px;" width="16" height="16" viewBox="0 0 16 16"><g fill="none" stroke="#3c3c3c" stroke-width="2.6"><path d="M1.5 1.5L6 8L1.5 14.5"/><path d="M8.5 1.5L13 8L8.5 14.5"/></g></svg>
<svg style="position:absolute;left:705px;top:191px;" width="8" height="34" viewBox="0 0 8 34"><g fill="#d2d2d2"><rect x="0" y="0" width="2" height="2"/><rect x="6" y="0" width="2" height="2"/><rect x="0" y="6" width="2" height="2"/><rect x="6" y="6" width="2" height="2"/><rect x="0" y="12" width="2" height="2"/><rect x="6" y="12" width="2" height="2"/><rect x="0" y="18" width="2" height="2"/><rect x="6" y="18" width="2" height="2"/><rect x="0" y="24" width="2" height="2"/><rect x="6" y="24" width="2" height="2"/><rect x="0" y="30" width="2" height="2"/><rect x="6" y="30" width="2" height="2"/></g></svg>
<span class="t" style="left:720.30px;top:165.16px;font-size:17.5px;color:#7d7d7d;letter-spacing:-0.154px;">Font</span>
<div style="position:absolute;left:759px;top:153px;width:215px;height:39px;border:2px solid #b2b2b2;border-radius:5px;background:#efefef;box-shadow:inset 0 2px 1px -1px #dcdcdc;"></div>
<div style="position:absolute;left:946px;top:155px;width:28px;height:39px;background:linear-gradient(#fff,#efefef);border-left:2px solid #c4c4c4;border-radius:0 3px 3px 0;"></div>
<svg style="position:absolute;left:955px;top:172px;" width="12" height="7" viewBox="0 0 12 7"><path d="M0 0H12L6 6.5Z" fill="#9a9a9a"/></svg>
<span class="t" style="left:767.00px;top:165.16px;font-size:17.5px;color:#7d7d7d;">Arial</span>
<span class="t" style="left:984.30px;top:165.16px;font-size:17.5px;color:#7d7d7d;letter-spacing:0.285px;">Height</span>
<div style="position:absolute;left:1041px;top:158px;width:106px;height:32px;border:2px solid #b2b2b2;border-radius:5px;background:#efefef;box-shadow:inset 0 2px 1px -1px #dcdcdc;"></div><div style="position:absolute;left:1127px;top:160px;width:20px;height:32px;background:linear-gradient(#fff,#efefef);border-left:2px solid #b2b2b2;border-radius:0 3px 3px 0;"></div><svg style="position:absolute;left:1133.0px;top:166.0px;" width="12" height="20" viewBox="0 0 12 20"><path d="M6 0.5L11.7 6.5H0.3Z" fill="#a2a2a2"/><path d="M0.3 13.5H11.7L6 19.5Z" fill="#a2a2a2"/></svg><span class="t" style="left:1051.30px;top:165.16px;font-size:17.5px;color:#7d7d7d;letter-spacing:-0.419px;">25.00</span>
<svg style="position:absolute;left:765px;top:205px;" width="32" height="20" viewBox="0 0 32 20"><rect x="0.5" y="0.5" width="31" height="19" rx="5" fill="#2b2b2b"/><rect x="2.5" y="2" width="12" height="16" rx="4" fill="#b8b8b8" stroke="#111" stroke-width="1"/></svg>
<span class="t" style="left:805.70px;top:207.16px;font-size:17.5px;color:#7d7d7d;letter-spacing:-0.182px;">Bold</span>
<svg style="position:absolute;left:765px;top:239.5px;" width="32" height="20" viewBox="0 0 32 20"><rect x="0.5" y="0.5" width="31" height="19" rx="5" fill="#2b2b2b"/><rect x="2.5" y="2" width="12" height="16" rx="4" fill="#b8b8b8" stroke="#111" stroke-width="1"/></svg>
<span class="t" style="left:806.00px;top:241.16px;font-size:17.5px;color:#7d7d7d;letter-spacing:-0.081px;">Italic</span>
<svg style="position:absolute;left:889px;top:205px;" width="32" height="20" viewBox="0 0 32 20"><rect x="0.5" y="0.5" width="31" height="19" rx="5" fill="#2b2b2b"/><rect x="2.5" y="2" width="12" height="16" rx="4" fill="#b8b8b8" stroke="#111" stroke-width="1"/></svg>
<span class="t" style="left:929.30px;top:207.16px;font-size:17.5px;color:#7d7d7d;letter-spacing:-0.318px;">Upper Case</span>
<svg style="position:absolute;left:889px;top:239.5px;" width="32" height="20" viewBox="0 0 32 20"><rect x="0.5" y="0.5" width="31" height="19" rx="5" fill="#2b2b2b"/><rect x="2.5" y="2" width="12" height="16" rx="4" fill="#b8b8b8" stroke="#111" stroke-width="1"/></svg>
<span class="t" style="left:929.30px;top:241.16px;font-size:17.5px;color:#7d7d7d;letter-spacing:0.206px;">Distort</span>
<svg style="position:absolute;left:1027px;top:205px;" width="32" height="20" viewBox="0 0 32 20"><rect x="0.5" y="0.5" width="31" height="19" rx="5" fill="#6e6e6e" stroke="#4a4a4a"/><rect x="17.5" y="1.5" width="13" height="17" rx="4" fill="#d4d4d4" stroke="#1a1a1a" stroke-width="1.6"/></svg>
<span class="t" style="left:1067.00px;top:207.16px;font-size:17.5px;color:#7d7d7d;letter-spacing:0.113px;">Welded</span>
<span class="t" style="left:1176.00px;top:172.16px;font-size:17.5px;color:#7d7d7d;letter-spacing:-0.710px;">HSpace</span>
<div style="position:absolute;left:1239px;top:163px;width:104px;height:32px;border:2px solid #b2b2b2;border-radius:5px;background:#efefef;box-shadow:inset 0 2px 1px -1px #dcdcdc;"></div><div style="position:absolute;left:1324px;top:165px;width:19px;height:32px;background:linear-gradient(#fff,#efefef);border-left:2px solid #b2b2b2;border-radius:0 3px 3px 0;"></div><svg style="position:absolute;left:1329.5px;top:171.0px;" width="12" height="20" viewBox="0 0 12 20"><path d="M6 0.5L11.7 6.5H0.3Z" fill="#a2a2a2"/><path d="M0.3 13.5H11.7L6 19.5Z" fill="#a2a2a2"/></svg><span class="t" style="left:1249.30px;top:172.16px;font-size:17.5px;color:#7d7d7d;letter-spacing:-0.590px;">0.00</span>
<span class="t" style="left:1177.00px;top:226.16px;font-size:17.5px;color:#7d7d7d;transform:scaleX(0.9299);transform-origin:0 0;">VSpace</span>
<div style="position:absolute;left:1239px;top:217px;width:104px;height:32px;border:2px solid #b2b2b2;border-radius:5px;background:#efefef;box-shadow:inset 0 2px 1px -1px #dcdcdc;"></div><div style="position:absolute;left:1324px;top:219px;width:19px;height:32px;background:linear-gradient(#fff,#efefef);border-left:2px solid #b2b2b2;border-radius:0 3px 3px 0;"></div><svg style="position:absolute;left:1329.5px;top:225.0px;" width="12" height="20" viewBox="0 0 12 20"><path d="M6 0.5L11.7 6.5H0.3Z" fill="#a2a2a2"/><path d="M0.3 13.5H11.7L6 19.5Z" fill="#a2a2a2"/></svg><span class="t" style="left:1249.30px;top:226.16px;font-size:17.5px;color:#7d7d7d;letter-spacing:-0.590px;">0.00</span>
<span class="t" style="left:1353.00px;top:172.16px;font-size:17.5px;color:#7d7d7d;letter-spacing:-0.007px;">Align X</span>
<div style="position:absolute;left:1413px;top:159.5px;width:107px;height:39px;border:2px solid #c2c2c2;border-radius:6px;background:linear-gradient(#fdfdfd,#f6f6f6 50%,#ececec);"></div><span class="t" style="left:1423.50px;top:172.16px;font-size:17.5px;color:#7d7d7d;letter-spacing:0.491px;">Middle</span><svg style="position:absolute;left:1500.7px;top:178.5px;" width="12" height="7" viewBox="0 0 12 7"><path d="M0 0H12L6 6.5Z" fill="#9a9a9a"/></svg>
<span class="t" style="left:1353.50px;top:226.16px;font-size:17.5px;color:#7d7d7d;letter-spacing:-0.019px;">Align Y</span>
<div style="position:absolute;left:1413px;top:213.5px;width:107px;height:39px;border:2px solid #c2c2c2;border-radius:6px;background:linear-gradient(#fdfdfd,#f6f6f6 50%,#ececec);"></div><span class="t" style="left:1423.50px;top:226.16px;font-size:17.5px;color:#7d7d7d;letter-spacing:0.491px;">Middle</span><svg style="position:absolute;left:1500.7px;top:232.5px;" width="12" height="7" viewBox="0 0 12 7"><path d="M0 0H12L6 6.5Z" fill="#9a9a9a"/></svg>
<div style="position:absolute;left:1529px;top:159.5px;width:184px;height:39px;border:2px solid #c2c2c2;border-radius:6px;background:linear-gradient(#fdfdfd,#f6f6f6 50%,#ececec);"></div><span class="t" style="left:1540.00px;top:172.16px;font-size:17.5px;color:#7d7d7d;letter-spacing:0.233px;">Normal</span><svg style="position:absolute;left:1693px;top:178.5px;" width="12" height="7" viewBox="0 0 12 7"><path d="M0 0H12L6 6.5Z" fill="#9a9a9a"/></svg>
<span class="t" style="left:1529.40px;top:226.16px;font-size:17.5px;color:#7d7d7d;letter-spacing:0.106px;">Offset</span>
<div style="position:absolute;left:1581px;top:217px;width:132px;height:32px;border:2px solid #b2b2b2;border-radius:5px;background:#efefef;box-shadow:inset 0 2px 1px -1px #dcdcdc;"></div><div style="position:absolute;left:1694px;top:219px;width:19px;height:32px;background:linear-gradient(#fff,#efefef);border-left:2px solid #b2b2b2;border-radius:0 3px 3px 0;"></div><svg style="position:absolute;left:1699.5px;top:225.0px;" width="12" height="20" viewBox="0 0 12 20"><path d="M6 0.5L11.7 6.5H0.3Z" fill="#a2a2a2"/><path d="M0.3 13.5H11.7L6 19.5Z" fill="#cfcfcf"/></svg><span class="t" style="left:1591.50px;top:226.16px;font-size:17.5px;color:#7d7d7d;">0</span>
<svg style="position:absolute;left:1723px;top:191px;" width="8" height="34" viewBox="0 0 8 34"><g fill="#d2d2d2"><rect x="0" y="0" width="2" height="2"/><rect x="6" y="0" width="2" height="2"/><rect x="0" y="6" width="2" height="2"/><rect x="6" y="6" width="2" height="2"/><rect x="0" y="12" width="2" height="2"/><rect x="6" y="12" width="2" height="2"/><rect x="0" y="18" width="2" height="2"/><rect x="6" y="18" width="2" height="2"/><rect x="0" y="24" width="2" height="2"/><rect x="6" y="24" width="2" height="2"/><rect x="0" y="30" width="2" height="2"/><rect x="6" y="30" width="2" height="2"/></g></svg>
<svg style="position:absolute;left:1745px;top:184px;" width="48" height="45" viewBox="0 0 48 45"><path d="M39.8 13.2A19 19 0 0 0 7.300 13.500" fill="none" stroke="#000" stroke-width="5.5" stroke-linecap="round"/>
<path d="M0.200 10.600L13.700 15.600L3.800 24.600Z" fill="#000" stroke="#000" stroke-width="1" stroke-linejoin="round"/>
<path d="M7.900 32.600A19 19 0 0 0 40.5 32" fill="none" stroke="#000" stroke-width="5.500" stroke-linecap="round"/>
<path d="M47.7 35.3L34.5 30L44.200 21.5Z" fill="#000" stroke="#000" stroke-width="1" stroke-linejoin="round"/>
<rect x="17.800" y="16.200" width="12.400" height="12.400" rx="2.600" transform="rotate(-10 24 22.5)" fill="#000"/></svg>
<svg style="position:absolute;left:1804px;top:175px;" width="16" height="16" viewBox="0 0 16 16"><g fill="none" stroke="#3c3c3c" stroke-width="2.6"><path d="M1.5 1.5L6 8L1.5 14.5"/><path d="M8.5 1.5L13 8L8.5 14.5"/></g></svg>
<svg style="position:absolute;left:1825px;top:191px;" width="8" height="34" viewBox="0 0 8 34"><g fill="#d2d2d2"><rect x="0" y="0" width="2" height="2"/><rect x="6" y="0" width="2" height="2"/><rect x="0" y="6" width="2" height="2"/><rect x="6" y="6" width="2" height="2"/><rect x="0" y="12" width="2" height="2"/><rect x="6" y="12" width="2" height="2"/><rect x="0" y="18" width="2" height="2"/><rect x="6" y="18" width="2" height="2"/><rect x="0" y="24" width="2" height="2"/><rect x="6" y="24" width="2" height="2"/><rect x="0" y="30" width="2" height="2"/><rect x="6" y="30" width="2" height="2"/></g></svg>
<svg style="position:absolute;left:1848px;top:186px;" width="61" height="42" viewBox="0 0 61 42"><g fill="none" stroke="#757575" stroke-width="1.200"><rect x="1.600" y="1.400" width="8.400" height="39.500"/><rect x="21.900" y="12.600" width="16.500" height="17"/><path d="M20 21.300H12.500M15.800 17.500Q13.200 19.500 12.500 21.300Q13.200 23.200 15.800 25"/>
<path d="M40 17.300Q41.600 15.500 43.200 17.100T46.500 16.800M40 21.700Q41.600 19.900 43.200 21.500T46.500 21.200M40 26.100Q41.600 24.300 43.200 25.900T46.500 25.600"/></g>
<path d="M59.800 12.500L63.300 17.500L59.800 22.500" fill="none" stroke="#555" stroke-width="2.400"/></svg>
<div style="position:absolute;left:1px;top:266px;width:114px;height:754px;background:linear-gradient(90deg,#f9f9f9,#f0f0f0);"></div>
<div style="position:absolute;left:114px;top:269px;width:2px;height:751px;background:#b4b4b4;"></div>
<div style="position:absolute;left:116px;top:266px;width:7px;height:754px;background:#f2f2f2;"></div>
<svg style="position:absolute;left:45px;top:271px;" width="34" height="8" viewBox="0 0 34 8"><g fill="#d2d2d2"><rect x="0" y="0" width="2" height="2"/><rect x="0" y="6" width="2" height="2"/><rect x="6" y="0" width="2" height="2"/><rect x="6" y="6" width="2" height="2"/><rect x="12" y="0" width="2" height="2"/><rect x="12" y="6" width="2" height="2"/><rect x="18" y="0" width="2" height="2"/><rect x="18" y="6" width="2" height="2"/><rect x="24" y="0" width="2" height="2"/><rect x="24" y="6" width="2" height="2"/><rect x="30" y="0" width="2" height="2"/><rect x="30" y="6" width="2" height="2"/></g></svg>
<div style="position:absolute;left:27px;top:285px;width:60px;height:58px;border:2px solid #a8a8a8;border-radius:6px;background:#dcdcdc;"></div>
<svg style="position:absolute;left:35px;top:290px;" width="48" height="50" viewBox="0 0 48 50"><path d="M10.400 4L10.400 39.200L19.800 31.500L26 46.500L33.200 43.300L27.300 29.600L38 27Z" fill="none" stroke="#000" stroke-width="3.600" stroke-linejoin="round"/></svg>
<svg style="position:absolute;left:35px;top:353px;" width="48" height="50" viewBox="0 0 48 50"><g transform="translate(9.3,47.6) rotate(29.5)"><path d="M-6.300 -14.500V-40H6.300V-14.500Z" fill="#000"/><path d="M-6.300 -41.400V-48.300A4.200 4.200 0 0 1 -2.100 -52.500H2.100A4.200 4.200 0 0 1 6.300 -48.300V-41.400Z" fill="#000"/>
<path d="M-5.800 -14.500C-5.800 -9 -3 -3.500 0 -0.500C3 -3.500 5.800 -9 5.800 -14.500Z" fill="#fff" stroke="#000" stroke-width="1.300" stroke-linejoin="round"/></g></svg>
<svg style="position:absolute;left:35px;top:415px;" width="48" height="50" viewBox="0 0 48 50"><rect x="3" y="3.200" width="42.100" height="41.600" fill="none" stroke="#000" stroke-width="6"/>
<path d="M48.100 24.900V47.800H24.900Z" fill="#028e8e"/><path d="M42.100 30.900V41.800H31Z" fill="#3fcccc"/></svg>
<svg style="position:absolute;left:35px;top:478px;" width="48" height="50" viewBox="0 0 48 50"><path d="M18.3 2.3L35.5 7.7L44.8 26.8L31.6 43.6L3 43.6L3 11.3Z" fill="none" stroke="#000" stroke-width="3.600" stroke-linejoin="round"/><circle cx="18.3" cy="2.3" r="3.300"/><circle cx="35.5" cy="7.7" r="3.300"/><circle cx="44.8" cy="26.8" r="3.300"/><circle cx="31.6" cy="43.6" r="3.300"/><circle cx="3" cy="43.6" r="3.300"/><circle cx="3" cy="11.3" r="3.300"/></svg>
<svg style="position:absolute;left:35px;top:540px;" width="48" height="50" viewBox="0 0 48 50"><path d="M32.200 -0.400C26 2 22.800 5.500 21.900 10L19.300 25.500L24.300 28.500C27.500 19 30.500 10 32.200 -0.400Z" fill="#000"/>
<path d="M47.800 18C42 18.800 35 19.600 29.800 20.500L25.500 28C35 27.500 43.500 25.500 47.800 18Z" fill="#000"/>
<ellipse cx="8.300" cy="23.700" rx="6.500" ry="4.500" fill="none" stroke="#000" stroke-width="3.600" transform="rotate(5 8.300 23.700)"/>
<ellipse cx="21.600" cy="38.800" rx="4.700" ry="6.200" fill="none" stroke="#000" stroke-width="3.600"/>
<path d="M14 25.500L21 27.500M20 27L21.300 33" stroke="#000" stroke-width="3.500"/>
<circle cx="20.400" cy="26.200" r="1.200" fill="#fff"/></svg>
<svg style="position:absolute;left:35px;top:602px;" width="48" height="50" viewBox="0 0 48 50"><text x="24.200" y="39.400" text-anchor="middle" font-family="Liberation Sans, sans-serif" font-weight="bold" font-size="46.500" fill="#000" stroke="#000" stroke-width="1.600" stroke-linejoin="miter">A</text></svg>
<svg style="position:absolute;left:35px;top:663px;" width="48" height="50" viewBox="0 0 48 50"><path d="M24.100 -0.200A17.500 17.500 0 0 1 41.600 17.300C41.600 21.500 40 24.500 38 28L27.200 46A3.600 3.600 0 0 1 21 46L10.200 28C8.200 24.500 6.600 21.500 6.600 17.300A17.500 17.500 0 0 1 24.100 -0.200Z" fill="#000"/><circle cx="24.100" cy="17.300" r="6.600" fill="#f5f5f5"/></svg>
<svg style="position:absolute;left:35px;top:725px;" width="48" height="50" viewBox="0 0 48 50"><g transform="translate(24,23.900) rotate(-45)" fill="none" stroke="#000" stroke-width="2.500"><rect x="-26.300" y="-5.100" width="52.600" height="10.200"/><g stroke-width="2"><path d="M-21.5 -5.100V-0.6"/><path d="M-16.1 -5.100V-2.4"/><path d="M-10.7 -5.100V-0.6"/><path d="M-5.4 -5.100V-2.4"/><path d="M0 -5.100V-0.6"/><path d="M5.4 -5.100V-2.4"/><path d="M10.7 -5.100V-0.6"/><path d="M16.1 -5.100V-2.4"/><path d="M21.5 -5.100V-0.6"/></g></g></svg>
<svg style="position:absolute;left:45px;top:789px;" width="34" height="8" viewBox="0 0 34 8"><g fill="#d2d2d2"><rect x="0" y="0" width="2" height="2"/><rect x="0" y="6" width="2" height="2"/><rect x="6" y="0" width="2" height="2"/><rect x="6" y="6" width="2" height="2"/><rect x="12" y="0" width="2" height="2"/><rect x="12" y="6" width="2" height="2"/><rect x="18" y="0" width="2" height="2"/><rect x="18" y="6" width="2" height="2"/><rect x="24" y="0" width="2" height="2"/><rect x="24" y="6" width="2" height="2"/><rect x="30" y="0" width="2" height="2"/><rect x="30" y="6" width="2" height="2"/></g></svg>
<svg style="position:absolute;left:35px;top:806px;" width="48" height="50" viewBox="0 0 48 50"><g fill="none" stroke="#666"><ellipse cx="24.200" cy="24.800" rx="21" ry="23.300" stroke-width="1.300"/><ellipse cx="24.200" cy="24.800" rx="15.600" ry="18.300" stroke-width="6.400"/><ellipse cx="24.200" cy="24.800" rx="10" ry="13" stroke-width="1.200"/></g></svg>
<div style="position:absolute;left:17px;top:865px;width:84px;height:2px;background:#d8d8d8;border-bottom:1px solid #fff;"></div>
<svg style="position:absolute;left:35px;top:876px;" width="48" height="50" viewBox="0 0 48 50"><path d="M18.300 1.800H47.200V30.700H40.600V48H12.800V38H2.800V8.400H18.300Z" fill="none" stroke="#666" stroke-width="2.800" stroke-linejoin="round"/>
<g fill="none" stroke="#666" stroke-width="1.500" stroke-dasharray="1.500 1.700"><rect x="19.400" y="9.600" width="11.200" height="21.100"/><rect x="13.200" y="19.100" width="27.400" height="18.200"/></g></svg>
<svg style="position:absolute;left:35px;top:938px;" width="48" height="50" viewBox="0 0 48 50"><g fill="none" stroke="#666" stroke-width="2.900" stroke-linejoin="round"><rect x="2.800" y="1.600" width="33.300" height="35.500" rx="1"/><rect x="13.900" y="12.700" width="33.300" height="35.500" rx="1"/></g>
<path d="M47.200 25.300V48.200H25Z" fill="#6f9b9b"/></svg>
<div style="position:absolute;left:17px;top:998px;width:84px;height:2px;background:#d8d8d8;border-bottom:1px solid #fff;"></div>
<svg style="position:absolute;left:35px;top:1008px;" width="48" height="12" viewBox="0 0 48 12"><g fill="#666"><rect x="0" y="0" width="12" height="12"/><rect x="18" y="0" width="12" height="12"/><rect x="36" y="0" width="12" height="12"/></g></svg>
<svg style="position:absolute;left:123px;top:275px;" width="994" height="745" viewBox="0 0 994 745"><rect x="0" y="0" width="994" height="745" fill="#f8f8f8"/><path d="M43 132V745M67 132V745M91 132V745M115 132V745M139 132V745M162 132V745M186 132V745M210 132V745M234 132V745M258 132V745M282 132V745M306 132V745M330 132V745M354 132V745M377 132V745M401 132V745M425 132V745M449 132V745M473 132V745M497 132V745M521 132V745M545 132V745M569 132V745M593 132V745M617 132V745M640 132V745M664 132V745M688 132V745M712 132V745M736 132V745M760 132V745M784 132V745M808 132V745M832 132V745M855 132V745M879 132V745M903 132V745M927 132V745M951 132V745M20 155H974M20 179H974M20 203H974M20 227H974M20 251H974M20 274H974M20 298H974M20 322H974M20 346H974M20 370H974M20 394H974M20 418H974M20 442H974M20 466H974M20 489H974M20 513H974M20 537H974M20 561H974M20 585H974M20 609H974M20 633H974M20 657H974M20 681H974M20 705H974M20 729H974M20 752H974" stroke="#dfdfdf" stroke-width="2" fill="none" shape-rendering="crispEdges"/><rect x="965" y="599" width="18" height="18" fill="#7ddc7d" stroke="#79b879" stroke-width="2"/><path d="M19 745V131H975V745" stroke="#000" stroke-width="2" fill="none" shape-rendering="crispEdges"/><path d="M311 20.5Q315 26 321.5 29" stroke="#0000e6" stroke-width="2" fill="none"/><g font-family="Liberation Sans, sans-serif" font-size="19.2" fill="#7e7e7e"><text x="15.2" y="27.399999999999977" textLength="9.6" lengthAdjust="spacingAndGlyphs">0</text><text x="201.1" y="27.399999999999977" textLength="19.1" lengthAdjust="spacingAndGlyphs">80</text><text x="387.0" y="27.399999999999977" textLength="28.7" lengthAdjust="spacingAndGlyphs">160</text><text x="577.7" y="27.399999999999977" textLength="28.7" lengthAdjust="spacingAndGlyphs">240</text><text x="768.4" y="27.399999999999977" textLength="28.7" lengthAdjust="spacingAndGlyphs">320</text><text x="959.1" y="27.399999999999977" textLength="28.7" lengthAdjust="spacingAndGlyphs">400</text><text x="8.0" y="138" textLength="28.7" lengthAdjust="spacingAndGlyphs">400</text><text x="957.0" y="138" textLength="28.7" lengthAdjust="spacingAndGlyphs">400</text><text x="8.0" y="330" textLength="28.7" lengthAdjust="spacingAndGlyphs">320</text><text x="957.0" y="330" textLength="28.7" lengthAdjust="spacingAndGlyphs">320</text><text x="8.0" y="520" textLength="28.7" lengthAdjust="spacingAndGlyphs">240</text><text x="957.0" y="520" textLength="28.7" lengthAdjust="spacingAndGlyphs">240</text><text x="8.0" y="710" textLength="28.7" lengthAdjust="spacingAndGlyphs">160</text><text x="957.0" y="710" textLength="28.7" lengthAdjust="spacingAndGlyphs">160</text></g></svg>
<div style="position:absolute;left:123px;top:266px;width:994px;height:9px;background:#f0f0f0;"></div>
<div style="position:absolute;left:1117px;top:266px;width:14px;height:754px;background:#f0f0f0;"></div>
<div style="position:absolute;left:76px;top:825px;width:226px;height:32px;background:rgba(228,232,246,0.22);"></div>
<span class="t" style="left:110.00px;top:830.80px;font-size:19px;color:rgba(205,205,212,0.3);letter-spacing:-0.626px;">Window Snip</span>
<div style="position:absolute;left:1131px;top:266px;width:778px;height:754px;background:#f0f0f0;"></div>
<div style="position:absolute;left:1131px;top:269px;width:778px;height:34px;background:linear-gradient(90deg,#000 0%,#3a0c0c 18%,#6a1a1b 35%,#9c2829 50%,#c23333 62%,#cf5132 80%,#e07a31 100%);"></div>
<span class="t" style="left:1143.50px;top:276.71px;font-size:18px;color:#fff;letter-spacing:-0.426px;">Cuts / Layers</span>
<svg style="position:absolute;left:1874px;top:274px;" width="35" height="22" viewBox="0 0 35 22"><g fill="none" stroke="#8a766a" stroke-width="1.500"><rect x="1.900" y="1.600" width="18.200" height="18.500" rx="2.500"/><rect x="8.800" y="5.200" width="8" height="7.400"/><rect x="5.500" y="9.200" width="7.800" height="7.400" fill="#df7430"/><rect x="27.800" y="1.600" width="18.200" height="18.500" rx="2.500"/></g>
<path d="M31 5L37 11L31 17" fill="none" stroke="#77665c" stroke-width="2.600"/></svg>
<div style="position:absolute;left:1133px;top:303px;width:733px;height:410px;background:#fff;border:1px solid #a8a8a8;border-top:none;"></div>
<div style="position:absolute;left:1134px;top:303px;width:733px;height:26px;background:linear-gradient(#fbfbfb,#ececec);"></div>
<div style="position:absolute;left:1134px;top:329px;width:733px;height:2px;background:#a6a6a6;"></div>
<div style="position:absolute;left:1193px;top:305px;width:1px;height:24px;background:#c8c8c8;border-right:1px solid #fff;"></div>
<div style="position:absolute;left:1253px;top:305px;width:1px;height:24px;background:#c8c8c8;border-right:1px solid #fff;"></div>
<div style="position:absolute;left:1313px;top:305px;width:1px;height:24px;background:#c8c8c8;border-right:1px solid #fff;"></div>
<div style="position:absolute;left:1391px;top:305px;width:1px;height:24px;background:#c8c8c8;border-right:1px solid #fff;"></div>
<div style="position:absolute;left:1457px;top:305px;width:1px;height:24px;background:#c8c8c8;border-right:1px solid #fff;"></div>
<div style="position:absolute;left:1517px;top:305px;width:1px;height:24px;background:#c8c8c8;border-right:1px solid #fff;"></div>
<span class="t" style="left:1141.40px;top:310.16px;font-size:17.5px;color:#000;">#</span>
<span class="t" style="left:1197.00px;top:310.16px;font-size:17.5px;color:#000;letter-spacing:-0.055px;">Layer</span>
<span class="t" style="left:1257.30px;top:310.16px;font-size:17.5px;color:#000;letter-spacing:0.556px;">Mode</span>
<span class="t" style="left:1317.20px;top:310.16px;font-size:17.5px;color:#000;letter-spacing:0.123px;">Spd/Pwr</span>
<span class="t" style="left:1394.60px;top:310.16px;font-size:17.5px;color:#000;letter-spacing:0.661px;">Output</span>
<span class="t" style="left:1460.80px;top:310.16px;font-size:17.5px;color:#000;letter-spacing:-0.194px;">Show</span>
<span class="t" style="left:1521.00px;top:310.16px;font-size:17.5px;color:#000;letter-spacing:0.203px;">Air</span>
<div style="position:absolute;left:1871px;top:349px;width:60px;height:40px;border:2px solid #adadad;border-radius:6px;background:linear-gradient(#fefefe,#ececec);box-shadow:0 1px 0 #c4c4c4;"></div>
<svg style="position:absolute;left:1886px;top:364px;" width="26" height="15" viewBox="0 0 26 15"><path d="M2.5 12.5L12 3.5L21.5 12.5" stroke="#000" stroke-width="4.5" fill="none"/></svg>
<div style="position:absolute;left:1871px;top:396px;width:60px;height:40px;border:2px solid #adadad;border-radius:6px;background:linear-gradient(#fefefe,#ececec);box-shadow:0 1px 0 #c4c4c4;"></div>
<svg style="position:absolute;left:1886px;top:411px;" width="26" height="15" viewBox="0 0 26 15"><path d="M2.5 2.5L12 11.5L21.5 2.5" stroke="#000" stroke-width="4.5" fill="none"/></svg>
<div style="position:absolute;left:1871px;top:487px;width:60px;height:39px;border:2px solid #adadad;border-radius:6px;background:linear-gradient(#fefefe,#ececec);box-shadow:0 1px 0 #c4c4c4;"></div>
<svg style="position:absolute;left:1882px;top:492px;" width="30" height="34" viewBox="0 0 30 34"><g fill="none" stroke="#000" stroke-width="2.400"><path d="M9 6.500V5A2.500 2.500 0 0 1 11.500 2.500H18.500A2.500 2.500 0 0 1 21 5V6.500"/><path d="M1 7.500H29" stroke-width="3"/><path d="M4.500 9V29A3 3 0 0 0 7.500 32H22.500A3 3 0 0 0 25.500 29V9"/><path d="M10.300 12V28M15 12V28M19.700 12V28" stroke-width="2.200"/></g></svg>
<div style="position:absolute;left:1871px;top:577px;width:60px;height:41px;border:2px solid #adadad;border-radius:6px;background:linear-gradient(#fefefe,#ececec);box-shadow:0 1px 0 #c4c4c4;"></div>
<svg style="position:absolute;left:1880px;top:581px;" width="30" height="36" viewBox="0 0 30 36"><g fill="none" stroke="#000" stroke-width="2.300"><path d="M12 27H5.500A3 3 0 0 1 2.500 24V5A3 3 0 0 1 5.500 2H12L16 6"/><path d="M17 9.500H24L31 16.500V31A3 3 0 0 1 28 34H17A3 3 0 0 1 14 31V12.500A3 3 0 0 1 17 9.500Z" fill="#f4f4f4"/></g>
<g stroke="#000" stroke-width="2"><path d="M6 10H11M6 14H11M6 18H11"/><path d="M18 20H28M18 24H26M18 28H28"/></g></svg>
<div style="position:absolute;left:1871px;top:624px;width:60px;height:40px;border:2px solid #adadad;border-radius:6px;background:linear-gradient(#fefefe,#ececec);box-shadow:0 1px 0 #c4c4c4;"></div>
<svg style="position:absolute;left:1880px;top:628px;" width="30" height="36" viewBox="0 0 30 36"><path d="M5 3.500H22A4 4 0 0 1 26 7.500V10L32 16V32A3 3 0 0 1 29 35H5A4 4 0 0 1 1 31V7.500A4 4 0 0 1 5 3.500Z" fill="#000"/>
<rect x="6.500" y="2.800" width="14" height="5.800" rx="1.500" fill="#000" stroke="#f4f4f4" stroke-width="1.300"/><circle cx="13.500" cy="2.600" r="3" fill="#000"/><circle cx="13.500" cy="2.400" r="1.300" fill="#f4f4f4"/>
<path d="M15 12H24V17.500H29.500V33H15A1 1 0 0 1 14 32V13A1 1 0 0 1 15 12Z" fill="#f4f4f4"/>
<g stroke="#000" stroke-width="2" stroke-linecap="round"><path d="M17 19H22M17 24H27M17 29H27"/></g></svg>
<div style="position:absolute;left:1135px;top:727px;width:780px;height:139px;background:#ececec;border:1px solid #dcdcdc;border-radius:4px;box-shadow:0 0 0 1px #f6f6f6;"></div>
<span class="t" style="left:1433.60px;top:746.16px;font-size:17.5px;color:#6e6e6e;letter-spacing:-0.096px;">Layer Color</span>
<div style="position:absolute;left:1535px;top:735px;width:106px;height:35px;border:2px solid #8c8c8c;border-radius:2px;background:#ececec;"></div>
<span class="t" style="left:1658.30px;top:746.16px;font-size:17.5px;color:#6e6e6e;letter-spacing:0.190px;">Speed (mm/m)</span>
<span class="t" style="left:1436.50px;top:788.16px;font-size:17.5px;color:#6e6e6e;letter-spacing:-0.397px;">Pass Count</span>
<span class="t" style="left:1659.60px;top:788.16px;font-size:17.5px;color:#6e6e6e;letter-spacing:-0.201px;">Power Max (%)</span>
<span class="t" style="left:1417.70px;top:829.16px;font-size:17.5px;color:#6e6e6e;letter-spacing:0.172px;">Interval (mm)</span>
<div style="position:absolute;left:1789px;top:737px;width:115px;height:31px;border:2px solid #b2b2b2;border-radius:5px;background:#efefef;box-shadow:inset 0 2px 1px -1px #dcdcdc;"></div><div style="position:absolute;left:1886px;top:739px;width:18px;height:31px;background:linear-gradient(#fff,#efefef);border-left:2px solid #b2b2b2;border-radius:0 3px 3px 0;"></div><svg style="position:absolute;left:1891.0px;top:744.5px;" width="12" height="20" viewBox="0 0 12 20"><path d="M6 0.5L11.7 6.5H0.3Z" fill="#a2a2a2"/><path d="M0.3 13.5H11.7L6 19.5Z" fill="#a2a2a2"/></svg><span class="t" style="left:1841.94px;top:746.16px;font-size:17.5px;color:#7d7d7d;">72.0</span>
<div style="position:absolute;left:1535px;top:780px;width:106px;height:30px;border:2px solid #b2b2b2;border-radius:5px;background:#efefef;box-shadow:inset 0 2px 1px -1px #dcdcdc;"></div><div style="position:absolute;left:1622px;top:782px;width:19px;height:30px;background:linear-gradient(#fff,#efefef);border-left:2px solid #b2b2b2;border-radius:0 3px 3px 0;"></div><svg style="position:absolute;left:1627.5px;top:787.0px;" width="12" height="20" viewBox="0 0 12 20"><path d="M6 0.5L11.7 6.5H0.3Z" fill="#a2a2a2"/><path d="M0.3 13.5H11.7L6 19.5Z" fill="#cfcfcf"/></svg><span class="t" style="left:1600.27px;top:788.16px;font-size:17.5px;color:#7d7d7d;">1</span>
<div style="position:absolute;left:1789px;top:780px;width:115px;height:30px;border:2px solid #b2b2b2;border-radius:5px;background:#efefef;box-shadow:inset 0 2px 1px -1px #dcdcdc;"></div><div style="position:absolute;left:1886px;top:782px;width:18px;height:30px;background:linear-gradient(#fff,#efefef);border-left:2px solid #b2b2b2;border-radius:0 3px 3px 0;"></div><svg style="position:absolute;left:1891.0px;top:787.0px;" width="12" height="20" viewBox="0 0 12 20"><path d="M6 0.5L11.7 6.5H0.3Z" fill="#a2a2a2"/><path d="M0.3 13.5H11.7L6 19.5Z" fill="#cfcfcf"/></svg><span class="t" style="left:1841.94px;top:788.16px;font-size:17.5px;color:#7d7d7d;">0.00</span>
<div style="position:absolute;left:1535px;top:822px;width:106px;height:30px;border:2px solid #b2b2b2;border-radius:5px;background:#efefef;box-shadow:inset 0 2px 1px -1px #dcdcdc;"></div><div style="position:absolute;left:1622px;top:824px;width:19px;height:30px;background:linear-gradient(#fff,#efefef);border-left:2px solid #b2b2b2;border-radius:0 3px 3px 0;"></div><svg style="position:absolute;left:1627.5px;top:829.0px;" width="12" height="20" viewBox="0 0 12 20"><path d="M6 0.5L11.7 6.5H0.3Z" fill="#a2a2a2"/><path d="M0.3 13.5H11.7L6 19.5Z" fill="#a2a2a2"/></svg><span class="t" style="left:1567.21px;top:829.16px;font-size:17.5px;color:#7d7d7d;">0.100</span>
<div style="position:absolute;left:1268px;top:873px;width:641px;height:1px;background:#d4d4d4;"></div>
<div style="position:absolute;left:1131px;top:871px;width:134px;height:39px;border:2px solid #b4b4b4;border-top:none;border-radius:0 0 6px 6px;background:#f9f9f9;"></div>
<div style="position:absolute;left:1131px;top:871px;width:138px;height:3px;background:#f6f6f6;"></div>
<span class="t" style="left:1149.00px;top:885.16px;font-size:17.5px;color:#000;letter-spacing:-0.161px;">Cuts / Layers</span>
<div style="position:absolute;left:1270px;top:875px;width:76px;height:31px;border:2px solid #bcbcbc;border-top:1px solid #cfcfcf;border-radius:0 0 4px 4px;background:#e2e2e2;"></div>
<span class="t" style="left:1288.00px;top:883.16px;font-size:17.5px;color:#000;letter-spacing:0.301px;">Move</span>
<div style="position:absolute;left:1352px;top:875px;width:90px;height:31px;border:2px solid #bcbcbc;border-top:1px solid #cfcfcf;border-radius:0 0 4px 4px;background:#e2e2e2;"></div>
<span class="t" style="left:1370.40px;top:883.16px;font-size:17.5px;color:#000;letter-spacing:0.038px;">Macros</span>
<svg style="position:absolute;left:1127px;top:870px;" width="2" height="34" viewBox="0 0 2 34"><g fill="#c8c8c8"><rect x="0" y="0" width="2" height="2"/><rect x="0" y="6" width="2" height="2"/><rect x="0" y="12" width="2" height="2"/><rect x="0" y="18" width="2" height="2"/><rect x="0" y="24" width="2" height="2"/><rect x="0" y="30" width="2" height="2"/></g></svg>
<svg style="position:absolute;left:1515px;top:916px;" width="34" height="2" viewBox="0 0 34 2"><g fill="#c0c0c0"><rect x="0" y="0" width="2" height="2"/><rect x="6" y="0" width="2" height="2"/><rect x="12" y="0" width="2" height="2"/><rect x="18" y="0" width="2" height="2"/><rect x="24" y="0" width="2" height="2"/><rect x="30" y="0" width="2" height="2"/></g></svg>
<div style="position:absolute;left:1131px;top:923px;width:778px;height:34px;background:linear-gradient(90deg,#000 0%,#3a0c0c 18%,#6a1a1b 35%,#9c2829 50%,#c23333 62%,#cf5132 80%,#e07a31 100%);"></div>
<span class="t" style="left:1143.50px;top:930.71px;font-size:18px;color:#fff;transform:scaleX(0.8772);transform-origin:0 0;">Laser</span>
<svg style="position:absolute;left:1874px;top:928px;" width="35" height="22" viewBox="0 0 35 22"><g fill="none" stroke="#8a766a" stroke-width="1.500"><rect x="1.900" y="1.600" width="18.200" height="18.500" rx="2.500"/><rect x="8.800" y="5.200" width="8" height="7.400"/><rect x="5.500" y="9.200" width="7.800" height="7.400" fill="#df7430"/><rect x="27.800" y="1.600" width="18.200" height="18.500" rx="2.500"/></g>
<path d="M31 5L37 11L31 17" fill="none" stroke="#77665c" stroke-width="2.600"/></svg>
<span class="t" style="left:1133.90px;top:968.16px;font-size:17.5px;color:#000;transform:scaleX(0.9172);transform-origin:0 0;">Ready</span>
<div style="position:absolute;left:1134px;top:999px;width:254px;height:30px;border:2px solid #b4b4b4;border-radius:5px;background:#fff;"></div>
<div style="position:absolute;left:1400px;top:999px;width:252px;height:30px;border:2px solid #b4b4b4;border-radius:5px;background:#fff;"></div>
<div style="position:absolute;left:1663px;top:999px;width:256px;height:30px;border:2px solid #b4b4b4;border-radius:5px;background:#fff;"></div>
<div style="position:absolute;left:0px;top:1019px;width:1909px;height:60px;background:#404040;"></div>
<div style="position:absolute;left:61px;top:1019px;width:516px;height:59px;background:#f2f2f2;border:1px solid #cfcfcf;box-sizing:border-box;border-width:2px 0 2px 2px;"></div>
<svg style="position:absolute;left:13px;top:1037px;" width="25" height="24" viewBox="0 0 25 24"><g fill="#fff"><path d="M0 3.4L10.2 2V11.5H0Z"/><path d="M11.4 1.8L24.5 0V11.5H11.4Z"/><path d="M0 12.6H10.2V22.1L0 20.7Z"/><path d="M11.4 12.6H24.5V24L11.4 22.2Z"/></g></svg>
<svg style="position:absolute;left:78px;top:1036px;" width="27" height="26" viewBox="0 0 27 26"><circle cx="17" cy="9.5" r="7.2" fill="none" stroke="#222" stroke-width="1.8"/><path d="M12 15L1.8 24.5" stroke="#222" stroke-width="1.8"/></svg>
<span class="t" style="left:122.00px;top:1038.09px;font-size:22px;color:#2a2a2a;letter-spacing:0.082px;">Type here to search</span>
<svg style="position:absolute;left:600px;top:1036px;" width="26" height="25" viewBox="0 0 26 25"><g fill="none" stroke="#fff" stroke-width="1.500"><rect x="1.400" y="8" width="15.600" height="9.900"/><path d="M1.400 0.700V3.900H17V0.700"/><path d="M1.400 24V20.600H17V24"/><path d="M23.700 0.700V24"/></g><rect x="22.200" y="8" width="3" height="3.200" fill="#fff"/></svg>
<svg style="position:absolute;left:672px;top:1031px;" width="36" height="36" viewBox="0 0 36 36"><path d="M17.80 9.20L33.50 9.20A18 18 0 0 0 2.33 8.80L10.18 22.40Z" fill="#ea4335" stroke="#ea4335" stroke-width="0.400"/><path d="M25.42 22.40L17.57 36.00A18 18 0 0 0 33.50 9.20L17.80 9.20Z" fill="#fbbc05" stroke="#fbbc05" stroke-width="0.400"/><path d="M10.18 22.40L2.33 8.80A18 18 0 0 0 17.57 36.00L25.42 22.40Z" fill="#34a853" stroke="#34a853" stroke-width="0.400"/><circle cx="17.8" cy="18" r="8.8" fill="#fff"/><circle cx="17.8" cy="18" r="7.200" fill="#4285f4"/></svg>
<svg style="position:absolute;left:749px;top:1035px;" width="33" height="28" viewBox="0 0 33 28"><defs><linearGradient id="fg" x1="0" y1="0" x2="0" y2="1"><stop offset="0" stop-color="#ffdb72"/><stop offset="1" stop-color="#f7c64b"/></linearGradient></defs>
<path d="M0 1.500A1.200 1.200 0 0 1 1.200 0.300H12.500L15.500 2.800H0Z" fill="#e9a800"/><path d="M0 2.400H31.200A1.200 1.200 0 0 1 32.400 3.600V23.200A1.200 1.200 0 0 1 31.200 24.400H1.200A1.200 1.200 0 0 1 0 23.200Z" fill="url(#fg)"/>
<path d="M5.100 15.600A1.200 1.200 0 0 1 6.300 14.400H25.100A1.200 1.200 0 0 1 26.300 15.600V26.600H21V19H10.400V26.600H5.100Z" fill="#3a96dd"/><rect x="10.400" y="19" width="10.600" height="5.400" fill="#f3c44c"/></svg>
<svg style="position:absolute;left:822px;top:1031px;" width="36" height="36" viewBox="0 0 36 36"><defs><linearGradient id="lbg" x1="0" y1="0" x2="1" y2="1"><stop offset="0" stop-color="#1c1414"/><stop offset="0.120" stop-color="#5a2c2a"/><stop offset="0.300" stop-color="#6e3230"/><stop offset="0.450" stop-color="#7a0f1e"/><stop offset="0.700" stop-color="#951523"/><stop offset="0.880" stop-color="#ee1c24"/><stop offset="1" stop-color="#f01c24"/></linearGradient></defs>
<rect x="0" y="0" width="36" height="36" rx="2.600" fill="url(#lbg)"/>
<path d="M0 12.200V7.300C4 4.200 8 3 11.800 3C17 3 20 5.500 22.800 8.600L26.600 7.200L27.700 12.900L21.800 11.500L24 10.200C21 7.500 17.500 6.100 12.500 6.200C7.500 6.400 3 9 0 12.200Z" fill="#fff"/>
<path d="M3.100 24.500C3.600 23 4.800 22.500 6 22.300L10 20.200C10.800 18.500 11.500 17 13.800 16.300L16.500 15.800L19.600 13.400L19 15.600L21.100 14.600L20.800 16.600C23 17.300 24.800 18.600 26 20L27.600 20.300L26.500 21.200C27.800 23.500 28.500 26.500 28.500 30C28.500 32.500 27.800 34.500 26.900 36H12C14.500 34.800 17 32.800 18.500 30.500C19.500 29 20 27.200 19 25.600C18 26.600 16.800 27.100 15.500 27.300L12.800 29.800C11.500 31 9.500 31.800 7.800 31.500L6.300 30.400L8.200 29.600L10.200 28.600L12 26.700L14.800 24.300L11.800 25.800L8.500 27.400L5.800 27.700L3.800 26.600Z" fill="#fff"/>
<path d="M11.300 20.800L13.600 19.800L12.900 20.900Z" fill="#7a1520"/></svg>
<div style="position:absolute;left:810px;top:1076px;width:61px;height:3px;background:#76b9ed;"></div>
<svg style="position:absolute;left:1203px;top:1032px;" width="36" height="34" viewBox="0 0 36 34"><defs><linearGradient id="sun" x1="0.150" y1="0.100" x2="0.800" y2="0.950"><stop offset="0" stop-color="#f9c52a"/><stop offset="0.500" stop-color="#f59a1c"/><stop offset="1" stop-color="#ee6a10"/></linearGradient><linearGradient id="cl" x1="0" y1="0" x2="0" y2="1"><stop offset="0" stop-color="#8fb7ee"/><stop offset="1" stop-color="#e6efff"/></linearGradient></defs>
<circle cx="15.900" cy="17" r="15.200" fill="url(#sun)"/>
<path d="M17 26C14.500 26 12.800 24.500 12.800 22.500C12.800 20.600 14.300 19.200 16.300 19.100C16.800 15.600 19.500 13.100 22.800 13.100C25.500 13.100 27.800 14.800 28.700 17.300C31.700 17.200 34.100 19 34.100 21.700C34.100 24.200 32.200 26 29.500 26Z" fill="url(#cl)"/></svg>
<span class="t" style="left:1250.80px;top:1039.90px;font-size:20px;color:#fff;transform:scaleX(0.9219);transform-origin:0 0;">14°C</span>
<span class="t" style="left:1306.20px;top:1039.90px;font-size:20px;color:#fff;letter-spacing:0.366px;">Mostly sunny</span>
<svg style="position:absolute;left:1471px;top:1041px;" width="20" height="14" viewBox="0 0 20 14"><path d="M1.2 12.2L10 3.4L18.800 12.200" stroke="#fff" stroke-width="1.500" fill="none"/></svg>
<svg style="position:absolute;left:1514px;top:1037px;" width="28" height="24" viewBox="0 0 28 24"><g fill="none" stroke="#fff" stroke-width="1.400"><rect x="7.700" y="6.800" width="17.200" height="11.300"/><path d="M3 3V7M6.300 3V7"/><path d="M1.500 7.300H7.800V11A3 3 0 0 1 4.800 13.600H4.500A3 3 0 0 1 1.500 11Z" fill="#404040"/><path d="M4.650 13.600V18.500H7.700"/></g><rect x="9.700" y="8.800" width="13.200" height="7.300" fill="#fff"/><rect x="25.600" y="10" width="1.600" height="5" fill="#fff"/></svg>
<svg style="position:absolute;left:1564px;top:1036px;" width="27" height="26" viewBox="0 0 27 26"><path d="M2 9.700H6.200L10.300 5.500V22.500L6.200 18.200H2Z" fill="none" stroke="#fff" stroke-width="1.400" stroke-linejoin="round"/>
<g fill="none" stroke-width="1.300"><path d="M13.800 11.300Q15.600 14 13.800 16.800" stroke="#fff"/><path d="M17.300 8.200Q21.400 14 17.300 19.800" stroke="#9a9a9a"/><path d="M21 5Q27.200 14 21 23" stroke="#8a8a8a"/></g></svg>
<svg style="position:absolute;left:1620px;top:1036px;" width="24" height="26" viewBox="0 0 24 26"><g fill="none" stroke="#fff" stroke-width="1.400" stroke-linecap="round" stroke-linejoin="round"><path d="M14.800 4.200L17.300 3.200A1.500 1.500 0 0 1 19.200 4L19.800 5.600L9.200 21.300L6.300 22.700L6 19.500Z"/><path d="M14 7L17.200 8.800"/><path d="M16.500 12.500C19.500 11.500 21.500 12.500 21 14.200C20.500 15.800 17 16.500 12.500 16.500"/><path d="M7.500 16.300C3.500 16.600 1.300 18.400 1.500 20.500C1.800 22.600 4.500 23 6.500 22.600"/></g></svg>
<span class="t" style="left:1671.90px;top:1040.07px;font-size:16.5px;color:#fff;transform:scaleX(0.9145);transform-origin:0 0;">ENG</span>
<span class="t" style="left:1738.30px;top:1026.62px;font-size:17px;color:#fff;letter-spacing:0.504px;">8:57 AM</span>
<span class="t" style="left:1725.70px;top:1054.62px;font-size:17px;color:#fff;letter-spacing:0.584px;">2025-07-08</span>
<svg style="position:absolute;left:1846px;top:1035px;" width="38" height="38" viewBox="0 0 38 38"><path d="M1 2.100H25.100V20.700H12.200V26.400L6.200 20.700H1Z" fill="#fff"/><g stroke="#404040" stroke-width="1.300"><path d="M6.200 7.300H20M6.200 11.300H20M6.200 15.200H16"/></g>
<circle cx="24.600" cy="25.500" r="12" fill="#3c3c3c" stroke="#9a9a9a" stroke-width="1"/><path d="M24.600 25.500L13.700 20.700A12 12 0 0 1 25.100 13.500Z" fill="#8a8a8a" opacity="0.850"/>
<text x="24.600" y="31.900" text-anchor="middle" font-family="Liberation Sans, sans-serif" font-weight="bold" font-size="17.500" fill="#fff">6</text></svg>
<div style="position:absolute;left:1901px;top:1019px;width:2px;height:60px;background:#8c8c8c;"></div>
<svg style="position:absolute;left:12px;top:10px;" width="24" height="24" viewBox="0 0 36 36"><defs><linearGradient id="lbg2" x1="0" y1="0" x2="1" y2="1"><stop offset="0" stop-color="#1c1414"/><stop offset="0.120" stop-color="#5a2c2a"/><stop offset="0.300" stop-color="#6e3230"/><stop offset="0.450" stop-color="#7a0f1e"/><stop offset="0.700" stop-color="#951523"/><stop offset="0.880" stop-color="#ee1c24"/><stop offset="1" stop-color="#f01c24"/></linearGradient></defs>
<rect x="0" y="0" width="36" height="36" rx="2.600" fill="url(#lbg2)"/>
<path d="M0 12.200V7.300C4 4.200 8 3 11.800 3C17 3 20 5.500 22.800 8.600L26.600 7.200L27.700 12.900L21.800 11.500L24 10.200C21 7.500 17.500 6.100 12.500 6.200C7.500 6.400 3 9 0 12.200Z" fill="#fff"/>
<path d="M3.100 24.500C3.600 23 4.800 22.500 6 22.300L10 20.200C10.800 18.500 11.500 17 13.800 16.300L16.500 15.800L19.600 13.400L19 15.600L21.100 14.600L20.800 16.600C23 17.300 24.800 18.600 26 20L27.600 20.300L26.500 21.200C27.800 23.500 28.500 26.500 28.500 30C28.500 32.500 27.800 34.500 26.900 36H12C14.500 34.800 17 32.800 18.500 30.500C19.500 29 20 27.200 19 25.600C18 26.600 16.800 27.100 15.500 27.300L12.800 29.800C11.500 31 9.500 31.800 7.800 31.500L6.300 30.400L8.200 29.600L10.200 28.600L12 26.700L14.800 24.300L11.800 25.800L8.500 27.400L5.800 27.700L3.800 26.600Z" fill="#fff"/>
<path d="M11.300 20.800L13.600 19.800L12.900 20.900Z" fill="#7a1520"/></svg>
</body></html>
